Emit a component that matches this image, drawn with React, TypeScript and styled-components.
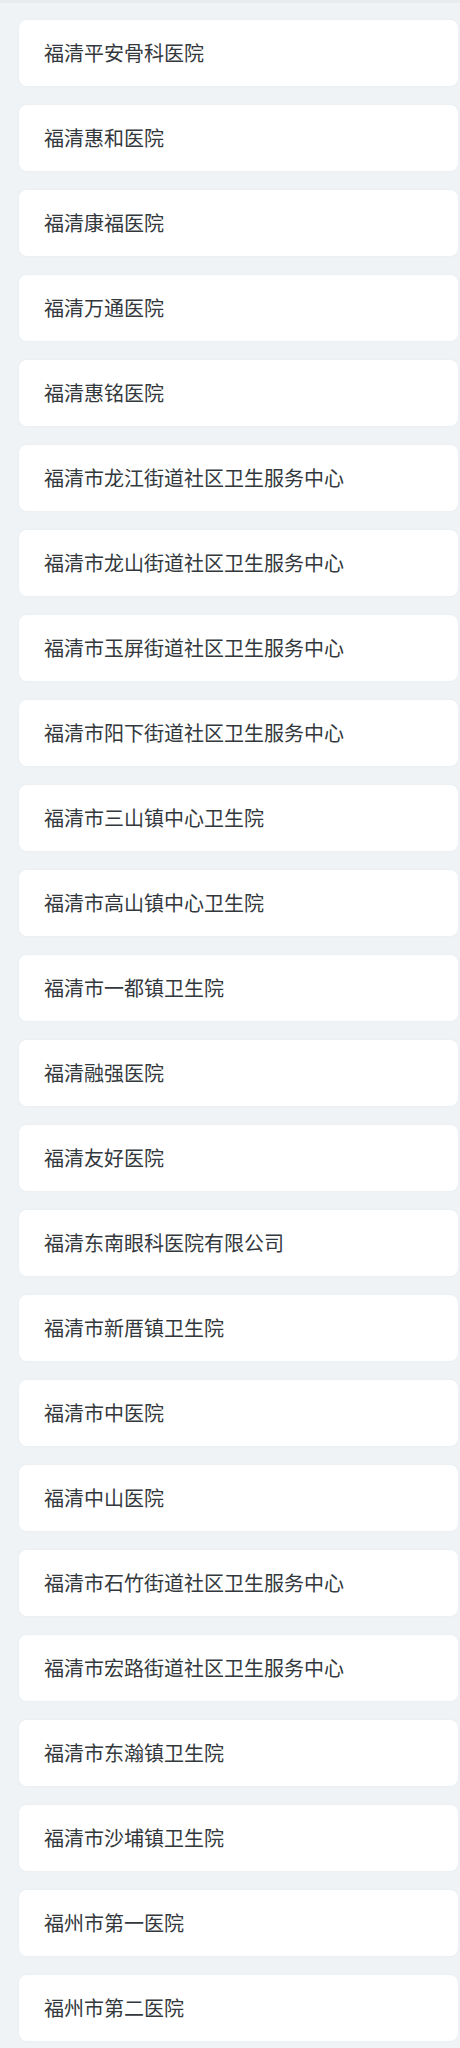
import React from "react";
import styled, { createGlobalStyle } from "styled-components";

const GlobalStyle = createGlobalStyle`
  html, body {
    margin: 0;
    padding: 0;
    background: #eff3f6;
  }
  body {
    font-family: "Noto Sans CJK SC", "Noto Sans", sans-serif;
  }
`;

const Page = styled.div`
  width: 460px;
  min-height: 2048px;
  box-sizing: border-box;
  background: #eff3f6;
  border-top: 3px solid #e8ecef;
  padding: 17px 2px 0 19px;
`;

const List = styled.ul`
  list-style: none;
  margin: 0;
  padding: 0;
  display: flex;
  flex-direction: column;
  gap: 19px;
`;

const Card = styled.li`
  height: 66px;
  box-sizing: border-box;
  background: #ffffff;
  border-radius: 8px;
  box-shadow: 0 0 3px rgba(0, 0, 0, 0.04);
  display: flex;
  align-items: center;
  padding: 0 0 0 25px;
`;

const Name = styled.span`
  font-size: 20px;
  color: #33383d;
  line-height: 1;
`;

const hospitals = [
  "福清平安骨科医院",
  "福清惠和医院",
  "福清康福医院",
  "福清万通医院",
  "福清惠铭医院",
  "福清市龙江街道社区卫生服务中心",
  "福清市龙山街道社区卫生服务中心",
  "福清市玉屏街道社区卫生服务中心",
  "福清市阳下街道社区卫生服务中心",
  "福清市三山镇中心卫生院",
  "福清市高山镇中心卫生院",
  "福清市一都镇卫生院",
  "福清融强医院",
  "福清友好医院",
  "福清东南眼科医院有限公司",
  "福清市新厝镇卫生院",
  "福清市中医院",
  "福清中山医院",
  "福清市石竹街道社区卫生服务中心",
  "福清市宏路街道社区卫生服务中心",
  "福清市东瀚镇卫生院",
  "福清市沙埔镇卫生院",
  "福州市第一医院",
  "福州市第二医院",
];

export default function App() {
  return (
    <>
      <GlobalStyle />
      <Page>
        <List>
          {hospitals.map((h) => (
            <Card key={h}>
              <Name>{h}</Name>
            </Card>
          ))}
        </List>
      </Page>
    </>
  );
}
